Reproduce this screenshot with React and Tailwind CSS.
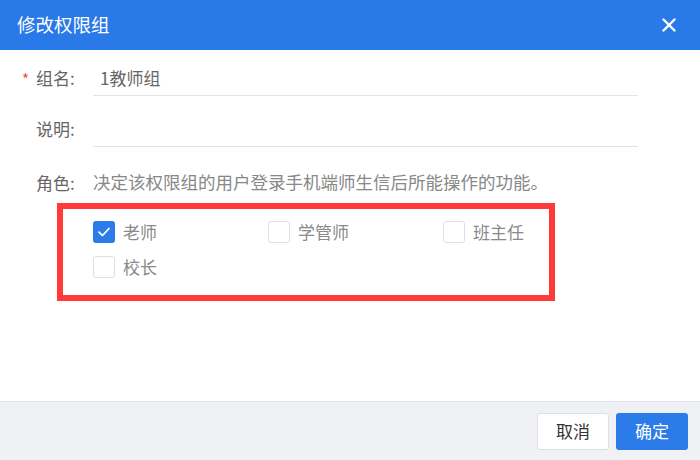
import React from "react";

const roles = [
  { name: "老师", checked: true },
  { name: "学管师", checked: false },
  { name: "班主任", checked: false },
  { name: "校长", checked: false },
];

const Checkbox = ({ checked }) =>
  checked ? (
    <span className="flex size-[22px] items-center justify-center rounded-[3px] bg-[#2b7be8]">
      <svg width="16" height="16" viewBox="0 0 16 16" fill="none">
        <path d="M3 8.2 6.5 11.5 13 4.5" stroke="#fff" strokeWidth="1.8" strokeLinecap="round" strokeLinejoin="round" />
      </svg>
    </span>
  ) : (
    <span className="size-[22px] rounded-[3px] border border-[#dcdfe6] bg-white" />
  );

const FormRow = ({ label, required, children, line = true }) => (
  <div className="flex h-[37px] items-center pl-[22px] pr-[62px]">
    <span className="w-[14px] self-start pt-[12px] text-[15px] leading-none text-[#f5484a]">
      {required ? "*" : ""}
    </span>
    <span className="w-[57px] text-[17px] text-[#666]">{label}</span>
    <div className={`flex h-full flex-1 items-center ${line ? "border-b border-[#e2e3e8]" : ""}`}>
      {children}
    </div>
  </div>
);

export default function App() {
  return (
    <div className="flex h-[460px] w-[700px] flex-col bg-white font-['Noto_Sans_CJK_SC',sans-serif]">
      {/* Header */}
      <div className="flex h-[50px] shrink-0 items-center justify-between bg-[#2979e8] pl-[17px] pr-[24px]">
        <span className="text-[18.5px] text-white">修改权限组</span>
        <svg width="14" height="14" viewBox="0 0 14 14">
          <path d="M1.5 1.5 12.5 12.5M12.5 1.5 1.5 12.5" stroke="#fff" strokeWidth="2.4" strokeLinecap="round" />
        </svg>
      </div>

      {/* Body */}
      <div className="flex flex-1 flex-col gap-[14px] pt-[9px]">
        <FormRow label="组名:" required>
          <span className="pl-[7px] pt-[1px] text-[17px] text-[#666]">1教师组</span>
        </FormRow>
        <FormRow label="说明:" />
        <div className="mt-[3px]">
          <FormRow label="角色:" line={false}>
            <span className="text-[17.5px] text-[#888]">决定该权限组的用户登录手机端师生信后所能操作的功能。</span>
          </FormRow>
          <div className="ml-[57px] mt-[2px] w-[498px] border-[6px] border-[#ff3a3a] pb-[17px] pl-[30px] pt-[12px]">
            <div className="grid grid-cols-[175px_175px_175px] gap-y-[13px]">
              {roles.map((r) => (
                <label key={r.name} className="flex h-[22px] items-center gap-[8px]">
                  <Checkbox checked={r.checked} />
                  <span className="text-[17px] leading-[22px] text-[#8a8a8a]">{r.name}</span>
                </label>
              ))}
            </div>
          </div>
        </div>
      </div>

      {/* Footer */}
      <div className="flex h-[59px] shrink-0 items-center justify-end gap-[7px] border-t border-[#e4e5ea] bg-[#f0f1f5] pr-[12px]">
        <button className="h-[37px] w-[72px] rounded-[3px] border border-[#dcdfe6] bg-white text-[17px] text-[#333]">
          取消
        </button>
        <button className="h-[37px] w-[72px] rounded-[3px] bg-[#2b7be8] text-[17px] text-white">
          确定
        </button>
      </div>
    </div>
  );
}
